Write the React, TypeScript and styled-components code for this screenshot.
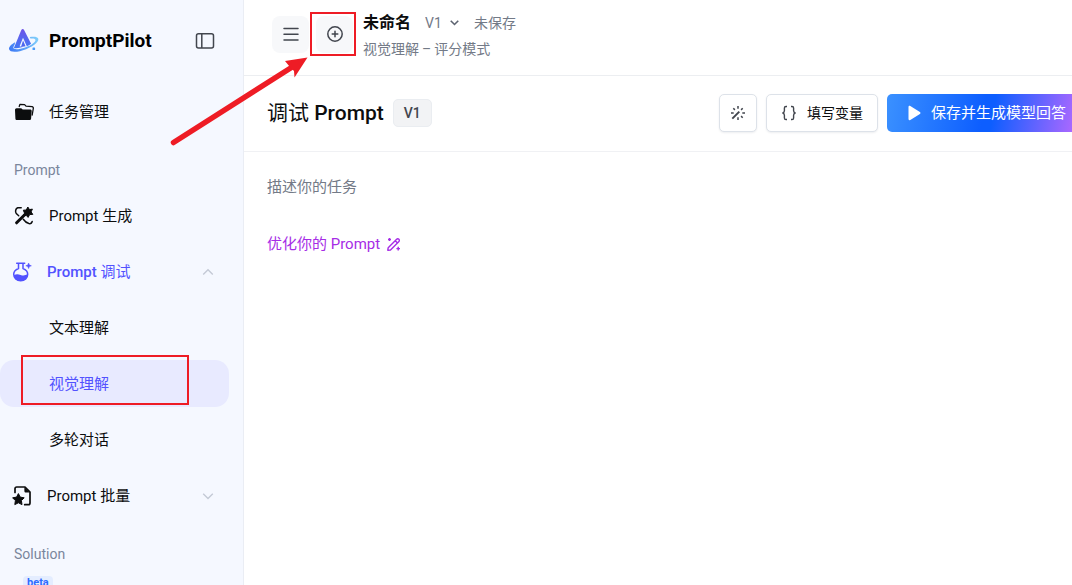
import React from 'react';
import styled, { createGlobalStyle, css } from 'styled-components';

const GlobalStyle = createGlobalStyle`
  *, *::before, *::after { box-sizing: border-box; }
  body {
    margin: 0;
    background: #fff;
    color: #0c0d0e;
    font-family: Roboto, "Noto Sans CJK SC", sans-serif;
    font-size: 15px;
  }
  button, select, textarea { font: inherit; color: inherit; }
  a { color: inherit; text-decoration: none; }
`;

const Shell = styled.div`
  position: relative;
  display: flex;
  height: 100vh;
  overflow: hidden;
`;

const Sidebar = styled.aside`
  flex: none;
  width: 244px;
  padding-top: 18px;
  background: #f5f8ff;
  border-right: 1px solid #eaedf4;
  overflow: hidden;
`;

const Brand = styled.div`
  display: flex;
  align-items: center;
  height: 46px;
  margin-bottom: 24px;
  padding: 0 28px 0 8px;
`;

const BrandName = styled.span`
  flex: 1;
  padding-left: 9px;
  font-size: 19px;
  font-weight: 700;
  line-height: 24px;
  color: #000;
`;

const PlainButton = styled.button`
  display: flex;
  padding: 0;
  border: 0;
  background: none;
  color: #42464e;
  cursor: pointer;
`;

const Nav = styled.nav`
  display: flex;
  flex-direction: column;
`;

const rowStyle = css<{ $active?: boolean }>`
  display: flex;
  align-items: center;
  height: 47px;
  margin: 0 14px 9px 0;
  border: 0;
  border-radius: 14px;
  background: none;
  line-height: 24px;
  text-align: left;
  cursor: pointer;
  color: ${(p) => (p.$active ? '#5252ff' : '#0c0d0e')};
`;

const NavLink = styled.a`
  ${rowStyle}
  gap: 15px;
  padding-left: 14px;
`;

const SubLink = styled.a`
  ${rowStyle}
  position: relative;
  padding-left: 49px;
  background: ${(p) => (p.$active ? '#e8eaff' : 'none')};
`;

const NavGroup = styled.button`
  ${rowStyle}
  gap: 15px;
  padding: 0 14px 0 12px;
  font-weight: ${(p) => (p.$active ? 500 : 400)};
`;

const GroupLabel = styled.span`
  flex: 1;
`;

const Regular = styled.span`
  font-weight: 400;
`;

const SectionTitle = styled.div`
  height: 48px;
  padding: 4px 0 0 14px;
  font-size: 14px;
  line-height: 44px;
  color: #7a869c;
`;

const BetaTag = styled.span`
  align-self: flex-start;
  margin-left: 23px;
  padding: 0 4px;
  border-radius: 4px;
  background: #e4edff;
  color: #2f6bff;
  font-size: 11px;
  font-weight: 700;
  line-height: 14px;
`;

const Main = styled.main`
  flex: 1;
  min-width: 0;
  display: flex;
  flex-direction: column;
`;

const TopBar = styled.header`
  display: flex;
  align-items: center;
  gap: 7px;
  height: 76px;
  padding: 0 28px 7px;
  border-bottom: 1px solid #eceef1;
`;

const SquareButton = styled.button`
  position: relative;
  display: flex;
  align-items: center;
  justify-content: center;
  width: 37px;
  height: 37px;
  padding: 0;
  border: 0;
  border-radius: 8px;
  background: #f7f8fa;
  color: #42464e;
  cursor: pointer;
`;

const DocInfo = styled.div`
  padding: 2px 0 0 3px;
`;

const DocLine = styled.div`
  display: flex;
  align-items: center;
  gap: 14px;
  line-height: 24px;
  font-size: 14px;
  color: #737a87;
`;

const DocName = styled.h1`
  margin: 0;
  font-size: 16px;
  font-weight: 700;
  line-height: 24px;
  color: #0c0d0e;
`;

const VersionPicker = styled.label`
  display: flex;
  align-items: center;
  gap: 7px;
`;

const VersionSelect = styled.select`
  appearance: none;
  padding: 0;
  border: 0;
  background: none;
  cursor: pointer;
`;

const DocMode = styled.p`
  margin: 3px 0 0;
  font-size: 14px;
  line-height: 22px;
  color: #737a87;
`;

const Dash = styled.span`
  margin: 0 3px;
`;

const Toolbar = styled.div`
  display: flex;
  align-items: center;
  justify-content: space-between;
  height: 76px;
  padding: 0 0 2px 23px;
  border-bottom: 1px solid #f0f1f4;
`;

const TitleGroup = styled.div`
  display: flex;
  align-items: center;
  gap: 9px;
`;

const Title = styled.h2`
  margin: 0;
  font-size: 21px;
  font-weight: 500;
  line-height: 32px;
`;

const VersionChip = styled.span`
  padding: 0 10px;
  border: 1px solid #eaedf1;
  border-radius: 5px;
  background: #f2f3f5;
  color: #42464e;
  font-size: 14px;
  font-weight: 500;
  line-height: 26px;
`;

const Actions = styled.div`
  display: flex;
  gap: 9px;
`;

const ActionButton = styled.button<{ $icon?: boolean }>`
  display: flex;
  align-items: center;
  justify-content: center;
  gap: 10px;
  height: 38px;
  padding: ${(p) => (p.$icon ? '0 10px' : '0 14px')};
  border: 1px solid #dde2e9;
  border-radius: 5px;
  background: #fff;
  font-size: 14px;
  line-height: 20px;
  box-shadow: 0 1px 2px rgba(30, 40, 70, 0.08);
  cursor: pointer;
`;

const RunButton = styled.button`
  display: flex;
  align-items: center;
  gap: 10px;
  height: 38px;
  padding: 0 6px 0 21px;
  border: 0;
  border-radius: 5px 0 0 5px;
  background: linear-gradient(100deg, #3b91ff 0%, #0d5eff 52%, #0d5eff 57%, #a968ff 100%);
  color: #fff;
  line-height: 20px;
  white-space: nowrap;
  cursor: pointer;
`;

const Editor = styled.div`
  padding: 23px;
`;

const TaskInput = styled.textarea`
  display: block;
  width: 100%;
  height: 45px;
  padding: 0;
  border: 0;
  outline: 0;
  resize: none;
  line-height: 24px;
  background: none;
  &::placeholder { color: #737a87; opacity: 1; }
`;

const OptimizeButton = styled(PlainButton)`
  align-items: center;
  gap: 7px;
  margin-top: 12px;
  line-height: 24px;
  color: #a62ce6;
`;

const redBox = css`
  position: absolute;
  border: 2px solid #ee1c25;
  pointer-events: none;
`;

const AddMark = styled.span`
  ${redBox}
  inset: -4px -3px -3px -6px;
`;

const LinkMark = styled.span`
  ${redBox}
  left: 21px;
  top: -5px;
  width: 168px;
  height: 50px;
`;

const ArrowMark = styled.svg`
  position: absolute;
  left: 168px;
  top: 56px;
  pointer-events: none;
`;

const Logo = () => (
  <svg width="32" height="26" viewBox="0 0 32 26" fill="none" aria-hidden="true">
    <defs>
      <linearGradient id="sail" x1="12" y1="1" x2="12" y2="22" gradientUnits="userSpaceOnUse">
        <stop stopColor="#6f52e8" />
        <stop offset="1" stopColor="#3d7df6" />
      </linearGradient>
      <linearGradient id="orbit" x1="1" y1="22" x2="31" y2="10" gradientUnits="userSpaceOnUse">
        <stop stopColor="#3c78f5" />
        <stop offset="1" stopColor="#82d2fb" />
      </linearGradient>
    </defs>
    <path d="M13.200 2.200c.8-1.500 2.200-1.500 3 0l6.900 13.500c-1.300 1.100-2.700 1.900-4.300 2.500L15 9.800l-3.400 8.400 3 .9c-2.700 1-5.800 1.400-8.700.9z" fill="url(#sail)" />
    <path d="M15 12.500l2.600 5.800-4.600.7z" fill="#4c66ef" />
    <path d="M7.200 14.200C3 16.300.6 19 1.100 21.300c.8 3.500 8.800 3.200 17-.1 8.500-3.400 13.500-8 12-10.900-.9-1.800-4.200-2-8.400-1.200l.7 1.500c2.800-.3 4.700.1 5 1.200.7 2.200-4 5.500-10.300 7.700-5.900 2-11.200 2.400-11.700.6-.3-1 .6-2.300 1.100-3z" fill="url(#orbit)" />
    <rect x="24.500" y="19.500" width="2.600" height="2.600" rx=".6" fill="#4d9cf8" />
  </svg>
);

const PanelIcon = () => (
  <svg width="20" height="18" viewBox="0 0 20 18" fill="none" stroke="currentColor" strokeWidth="1.500" aria-hidden="true">
    <rect x="1.500" y="1.700" width="17" height="14.300" rx="2" />
    <path d="M6.800 1.700V16" />
  </svg>
);

const FolderIcon = () => (
  <svg width="20" height="20" viewBox="0 0 20 20" aria-hidden="true">
    <path d="M5.200 4.500 5.900 2.400 10.600 2.600l1.400 1.500 6 .6c1 .2 1.500.8 1.300 1.800L18.200 13" fill="none" stroke="#0c0d0e" strokeWidth="1.300" strokeLinejoin="round" strokeLinecap="round" />
    <path d="M1 8c0-1 .6-1.700 1.600-1.700h4.600l1.500 1.100h7.300c1.100 0 1.800.7 1.700 1.700l-.6 7.300c-.1 1-.7 1.600-1.700 1.600H3c-1 0-1.600-.6-1.600-1.600z" fill="#0c0d0e" />
  </svg>
);

const WandIcon = () => (
  <svg width="20" height="20" viewBox="0 0 20 20" fill="none" aria-hidden="true">
    <path d="M9.300 4.200 12.300 4l1.500-3 1.700 2.600 2.900-.5-1.300 2.800 1.700 2.500-3.100.1-1.600 2.900-1.900-2.100-2.900.4 1.300-2.500z" fill="#0c0d0e" stroke="#0c0d0e" strokeLinejoin="round" />
    <path d="M2.600 16.800 11 8.500" stroke="#0c0d0e" strokeWidth="3" strokeLinecap="round" />
    <path d="M7.200 1.800H3.700C1.600 2.500.9 5.800 2.300 7.600l2.400 2.100M9.300 13.300c1.500 2.100 3.600 3.900 5.600 4.300 1.700.3 2.900-.5 3.300-2.200" stroke="#0c0d0e" strokeWidth="1.500" strokeLinecap="round" />
  </svg>
);

const FlaskIcon = () => (
  <svg width="20" height="20" viewBox="0 0 20 20" fill="none" aria-hidden="true">
    <path d="M4.700 1.200h8M6.500 1.500v5C3.400 7.700 1.700 9.800 1.700 12.300c0 3.600 3 6.500 7 6.500s7-2.900 7-6.500c0-2.500-1.700-4.600-4.700-5.800v-5" stroke="#5252ff" strokeWidth="1.500" strokeLinecap="round" strokeLinejoin="round" />
    <path d="M2 13c2.400-1.300 4.400-.9 6.600-.1 2.300.8 4.500.8 7-.6 0 3.900-2.900 6.500-6.900 6.500S2 16.600 2 13z" fill="#5252ff" />
    <path d="M16.600 1l.8 2 2 .8-2 .8-.8 2-.8-2-2-.8 2-.8z" fill="#5252ff" stroke="#5252ff" strokeWidth=".5" />
  </svg>
);

const BatchIcon = () => (
  <svg width="20" height="20" viewBox="0 0 20 20" fill="none" aria-hidden="true">
    <path d="M3 6.500V2.700C3 1.700 3.600 1 4.700 1H13l5 5v11c0 1-.6 1.700-1.700 1.700h-3.600" stroke="#0c0d0e" strokeWidth="1.700" strokeLinecap="round" strokeLinejoin="round" />
    <path d="M12.400 1v4c0 1 .6 1.600 1.600 1.600h4z" fill="#0c0d0e" />
    <path d="M6.400 7.600l1.800 3.500 4 .7-2.800 2.800.6 4-3.600-1.800-3.600 1.800.6-4L.6 11.800l4-.7z" fill="#0c0d0e" stroke="#0c0d0e" strokeLinejoin="round" />
  </svg>
);

const Chevron = ({ up, color = '#c4cad6', size = 14, weight = 1.4 }: { up?: boolean; color?: string; size?: number; weight?: number }) => (
  <svg width={size} height={size} viewBox="0 0 14 14" fill="none" stroke={color} strokeWidth={weight} aria-hidden="true">
    <path d={up ? 'M2.200 9.500 7 4.700l4.800 4.800' : 'M2.200 4.700 7 9.500l4.800-4.800'} />
  </svg>
);

const MenuIcon = () => (
  <svg width="18" height="18" viewBox="0 0 18 18" stroke="currentColor" strokeWidth="1.500" strokeLinecap="round" aria-hidden="true">
    <path d="M2 3.500h14M2 9.200h14M2 15h14" />
  </svg>
);

const AddIcon = () => (
  <svg width="18" height="18" viewBox="0 0 18 18" fill="none" stroke="currentColor" strokeWidth="1.500" strokeLinecap="round" aria-hidden="true">
    <circle cx="9" cy="9" r="7.200" />
    <path d="M9 6.200v5.600M6.200 9h5.600" />
  </svg>
);

const SparkIcon = () => (
  <svg width="16" height="16" viewBox="0 0 16 16" fill="none" stroke="#42464e" strokeWidth="1.500" aria-hidden="true">
    <path d="M8 1v2.800M8 12.300V15M1 8h2.700M12.300 8H15M3.300 3.300l1.600 1.600M12.700 3.300l-1.600 1.600M11.100 11.100l1.600 1.600" />
    <path d="M9.300 6.700 2.300 13.700" strokeWidth="1.900" />
  </svg>
);

const BracesIcon = () => (
  <svg width="16" height="16" viewBox="0 0 16 16" fill="none" stroke="#42464e" strokeWidth="1.400" aria-hidden="true">
    <path d="M6 1.500H5c-1 0-1.600.6-1.600 1.600v2.700c0 1.200-.6 1.900-1.900 2.200 1.300.3 1.900 1 1.900 2.200v2.700c0 1 .6 1.600 1.600 1.600h1M10 1.500h1c1 0 1.600.6 1.600 1.600v2.700c0 1.200.6 1.900 1.900 2.200-1.300.3-1.900 1-1.900 2.200v2.700c0 1-.6 1.600-1.600 1.600h-1" />
  </svg>
);

const PlayIcon = () => (
  <svg width="13" height="16" viewBox="0 0 13 16" fill="#fff" aria-hidden="true">
    <path d="M.5 2C.5.900 1.400.500 2.300 1.100l9.600 6c.8.500.8 1.400 0 1.900l-9.600 6c-.9.600-1.800.1-1.800-.9z" />
  </svg>
);

const PencilSparkIcon = () => (
  <svg width="14" height="14" viewBox="0 0 14 14" fill="none" stroke="currentColor" strokeWidth="1.400" strokeLinejoin="round" aria-hidden="true">
    <path d="M1.200 10.700 9.400 2.500c.8-.8 1.900-.8 2.500-.2s.6 1.700-.2 2.500L3.500 13l-2.700.2zM8.300 3.700l2.200 2.200" />
    <path d="M2.500 1v3M1 2.500h3M11.200 9.800v3.600M9.400 11.600h3.600" />
  </svg>
);

const SUB_ITEMS = [
  { label: '文本理解', active: false },
  { label: '视觉理解', active: true },
  { label: '多轮对话', active: false },
];

export default function App() {
  return (
    <>
      <GlobalStyle />
      <Shell>
        <Sidebar>
          <Brand>
            <Logo />
            <BrandName>PromptPilot</BrandName>
            <PlainButton aria-label="收起侧栏"><PanelIcon /></PlainButton>
          </Brand>
          <Nav>
            <NavLink href="#tasks"><FolderIcon />任务管理</NavLink>
            <SectionTitle>Prompt</SectionTitle>
            <NavLink href="#generate"><WandIcon />Prompt 生成</NavLink>
            <NavGroup $active aria-expanded="true">
              <FlaskIcon />
              <GroupLabel>Prompt <Regular>调试</Regular></GroupLabel>
              <Chevron up />
            </NavGroup>
            {SUB_ITEMS.map((item) => (
              <SubLink key={item.label} href="#debug" $active={item.active}>
                {item.label}
                {item.active && <LinkMark />}
              </SubLink>
            ))}
            <NavGroup aria-expanded="false">
              <BatchIcon />
              <GroupLabel>Prompt 批量</GroupLabel>
              <Chevron />
            </NavGroup>
            <SectionTitle>Solution</SectionTitle>
            <BetaTag>beta</BetaTag>
          </Nav>
        </Sidebar>
        <Main>
          <TopBar>
            <SquareButton aria-label="菜单"><MenuIcon /></SquareButton>
            <SquareButton aria-label="新建"><AddIcon /><AddMark /></SquareButton>
            <DocInfo>
              <DocLine>
                <DocName>未命名</DocName>
                <VersionPicker>
                  <VersionSelect aria-label="版本"><option>V1</option></VersionSelect>
                  <Chevron color="#5c6370" size={11} weight={2} />
                </VersionPicker>
                <span>未保存</span>
              </DocLine>
              <DocMode>视觉理解<Dash>–</Dash>评分模式</DocMode>
            </DocInfo>
          </TopBar>
          <Toolbar>
            <TitleGroup>
              <Title><Regular>调试</Regular> Prompt</Title>
              <VersionChip>V1</VersionChip>
            </TitleGroup>
            <Actions>
              <ActionButton $icon aria-label="优化"><SparkIcon /></ActionButton>
              <ActionButton><BracesIcon />填写变量</ActionButton>
              <RunButton><PlayIcon />保存并生成模型回答</RunButton>
            </Actions>
          </Toolbar>
          <Editor>
            <TaskInput aria-label="任务描述" placeholder="描述你的任务" />
            <OptimizeButton>优化你的 Prompt<PencilSparkIcon /></OptimizeButton>
          </Editor>
        </Main>
        <ArrowMark width="142" height="92" viewBox="0 0 142 92" aria-hidden="true">
          <path d="M5.500 86.500 125 10.500" stroke="#ee1c25" strokeWidth="5.500" strokeLinecap="round" />
          <path d="M139.500 1.500 117 5l4.500 5.500L126 15l.5 6.500z" fill="#ee1c25" />
        </ArrowMark>
      </Shell>
    </>
  );
}
